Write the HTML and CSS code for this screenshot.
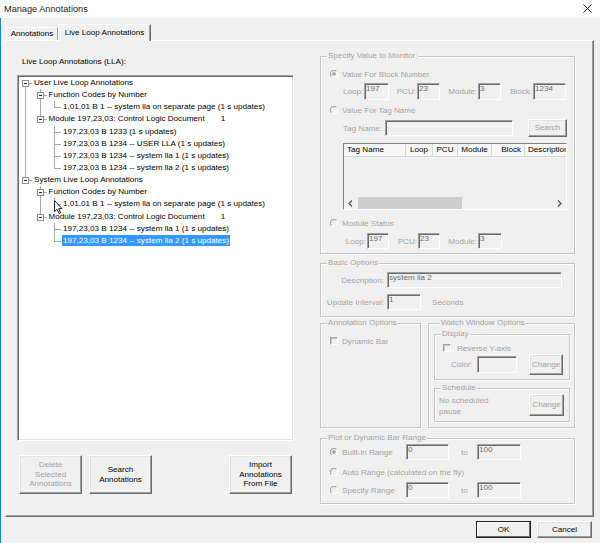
FILE: index.html
```html
<!DOCTYPE html>
<html lang="en">
<head>
  <meta charset="UTF-8">
  <title>Manage Annotations</title>
  <link rel="stylesheet" href="styles.css">
</head>
<body>

<div class="titlebar">
  <span class="title">Manage Annotations</span>
  <svg class="close" width="9" height="9" viewBox="0 0 9 9">
    <path d="M0.5 0.5 L8.5 8.5 M8.5 0.5 L0.5 8.5" stroke="#111" stroke-width="1" fill="none"/>
  </svg>
</div>

<div class="client">
  <div class="tabstrip">
    <div class="tab">Annotations</div>
    <div class="tab active">Live Loop Annotations</div>
  </div>

  <div class="tabpanel">
    <div class="leftcol">
      <div class="caption">Live Loop Annotations (LLA):</div>
      <div class="tree">
        <ul>
          <li>
            <div class="node"><span class="exp"></span>User Live Loop Annotations</div>
            <ul>
              <li>
                <div class="node"><span class="exp"></span>Function Codes by Number</div>
                <ul>
                  <li><div class="node">1,01,01 B 1 -- system lla on separate page (1 s updates)</div></li>
                </ul>
              </li>
              <li>
                <div class="node"><span class="exp"></span>Module 197,23,03: Control Logic Document<span class="cnt">1</span></div>
                <ul>
                  <li><div class="node">197,23,03 B 1233 (1 s updates)</div></li>
                  <li><div class="node">197,23,03 B 1234 -- USER LLA (1 s updates)</div></li>
                  <li><div class="node">197,23,03 B 1234 -- system lla 1 (1 s updates)</div></li>
                  <li><div class="node">197,23,03 B 1234 -- system lla 2 (1 s updates)</div></li>
                </ul>
              </li>
            </ul>
          </li>
          <li>
            <div class="node"><span class="exp"></span>System Live Loop Annotations</div>
            <ul>
              <li>
                <div class="node"><span class="exp"></span>Function Codes by Number</div>
                <ul>
                  <li><div class="node">1,01,01 B 1 -- system lla on separate page (1 s updates)</div></li>
                </ul>
              </li>
              <li>
                <div class="node"><span class="exp"></span>Module 197,23,03: Control Logic Document<span class="cnt">1</span></div>
                <ul>
                  <li><div class="node">197,23,03 B 1234 -- system lla 1 (1 s updates)</div></li>
                  <li><div class="node"><span class="sel">197,23,03 B 1234 -- system lla 2 (1 s updates)</span></div></li>
                </ul>
              </li>
            </ul>
          </li>
        </ul>
      </div>

      <div class="actions">
        <button class="btn tall off">Delete<br>Selected<br>Annotations</button>
        <button class="btn tall">Search<br>Annotations</button>
        <button class="btn tall push">Import<br>Annotations<br>From File</button>
      </div>
    </div>

    <div class="rightcol">
      <fieldset class="group g-monitor">
        <legend>Specify Value to Monitor:</legend>
        <div class="opt r-a"><span class="radio on"></span>Value For Block Number</div>
        <div class="inrow r-b">
          <span class="lbl w21">Loop:</span><span class="field w25">197</span>
          <span class="lbl w28">PCU:</span><span class="field w23">23</span>
          <span class="lbl w38">Module:</span><span class="field w23">3</span>
          <span class="lbl w32">Block:</span><span class="field w33">1234</span>
        </div>
        <div class="opt r-c"><span class="radio"></span>Value For Tag Name</div>
        <div class="inrow r-d">
          <span class="lbl w42 left">Tag Name:</span><span class="field w128"></span>
          <button class="btn off small">Search</button>
        </div>
        <div class="lv">
          <div class="lv-head">
            <span class="c1">Tag Name</span><span class="c2">Loop</span><span class="c3">PCU</span><span class="c4">Module</span><span class="c5">Block</span><span class="c6">Description</span>
          </div>
          <div class="lv-body"></div>
          <div class="hscroll">
            <span class="arr">
              <svg width="5" height="7" viewBox="0 0 5 7"><path d="M4 0.5 L1 3.5 L4 6.5" stroke="#555" stroke-width="1.3" fill="none"/></svg>
            </span>
            <span class="track"><span class="thumb"></span></span>
            <span class="arr">
              <svg width="5" height="7" viewBox="0 0 5 7"><path d="M1 0.5 L4 3.5 L1 6.5" stroke="#555" stroke-width="1.3" fill="none"/></svg>
            </span>
          </div>
        </div>
        <div class="opt r-f"><span class="radio"></span>Module Status</div>
        <div class="inrow r-g">
          <span class="lbl w24">Loop:</span><span class="field w22">197</span>
          <span class="lbl w29">PCU:</span><span class="field w22">23</span>
          <span class="lbl w38">Module:</span><span class="field w24">3</span>
        </div>
      </fieldset>

      <fieldset class="group g-basic">
        <legend>Basic Options</legend>
        <div class="inrow b-1">
          <span class="lbl w66">Description:</span><span class="field w175">system lla 2</span>
        </div>
        <div class="inrow b-2">
          <span class="lbl w66">Update Interval:</span><span class="field w34">1</span>
          <span class="unit">Seconds</span>
        </div>
      </fieldset>

      <div class="optrow">
        <fieldset class="group g-annot">
          <legend>Annotation Options</legend>
          <div class="opt k-1"><span class="check"></span>Dynamic Bar</div>
        </fieldset>
        <fieldset class="group g-watch">
          <legend>Watch Window Options</legend>
          <fieldset class="group g-display">
            <legend>Display</legend>
            <div class="opt k-2"><span class="check"></span>Reverse Y-axis</div>
            <div class="colorrow">
              <span class="lbl w26 left">Color:</span><span class="field w40 h17"></span>
              <button class="btn off change">Change</button>
            </div>
          </fieldset>
          <fieldset class="group g-sched">
            <legend>Schedule</legend>
            <div class="schedrow">
              <span class="schedtext">No scheduled<br>pause</span>
              <button class="btn off change2">Change</button>
            </div>
          </fieldset>
        </fieldset>
      </div>

      <fieldset class="group g-plot">
        <legend>Plot or Dynamic Bar Range</legend>
        <div class="opt p-1"><span class="radio on"></span><span class="rlbl">Built-in Range</span><span class="field w43">0</span><span class="to">to</span><span class="field w44">100</span></div>
        <div class="opt p-2"><span class="radio"></span>Auto Range (calculated on the fly)</div>
        <div class="opt p-3"><span class="radio"></span><span class="rlbl">Specify Range</span><span class="field w43">0</span><span class="to">to</span><span class="field w44">100</span></div>
      </fieldset>
    </div>
  </div>

  <div class="footer">
    <button class="btn dlg default">OK</button>
    <button class="btn dlg">Cancel</button>
  </div>
</div>

<svg class="cursor" width="10" height="15" viewBox="0 0 10 15">
  <path d="M0.5 0.5 L0.5 11.5 L3 9.2 L5 13.5 L6.6 12.8 L4.7 8.6 L8 8.6 Z" fill="#fff" stroke="#222" stroke-width="1"/>
</svg>

</body>
</html>
```

FILE: styles.css
```css
* {
  box-sizing: border-box;
}

body {
  margin: 0;
  width: 600px;
  height: 543px;
  overflow: hidden;
  font-family: "Liberation Sans", Arial, sans-serif;
  font-size: 8.1px;
  color: #000;
  background: #f0f0f0;
  position: relative;
}

.titlebar {
  height: 18px;
  background: #fff;
  display: flex;
  align-items: center;
  justify-content: space-between;
  padding: 0 8px 1px 4px;
}

.title {
  font-size: 9.2px;
  line-height: 12px;
  color: #1a1a1a;
}

.client {
  height: 525px;
  border-left: 1px solid #1883d7;
  background: #f0f0f0;
}

/* tabs */
.tabstrip {
  height: 22px;
  display: flex;
  align-items: flex-end;
  padding-left: 5px;
}

.tab {
  width: 52px;
  height: 13px;
  line-height: 12px;
  text-align: center;
  border: 1px solid #fff;
  border-bottom: none;
  border-right-color: #a0a0a0;
}

.tab.active {
  width: 93px;
  height: 17px;
  line-height: 15px;
  margin-bottom: -1px;
  background: #f0f0f0;
  border-right: 1px solid #696969;
  box-shadow: inset -1px 0 #a0a0a0;
  position: relative;
  z-index: 1;
}

.tabpanel {
  margin-left: 4px;
  width: 589px;
  height: 477px;
  border: 1px solid;
  border-color: #fff #696969 #696969 #fff;
  box-shadow: inset -1px -1px #a0a0a0;
  display: flex;
  gap: 26px;
  padding: 10px 0 0 11px;
}

/* left column */
.leftcol {
  width: 277px;
}

.caption {
  margin: 5px 0 0 5px;
  height: 12px;
  line-height: 12px;
}

.tree {
  margin-top: 7px;
  height: 366px;
  background: #fff;
  border: 1px solid;
  border-color: #a0a0a0 #fff #fff #a0a0a0;
  box-shadow: inset 1px 1px #696969, inset -1px -1px #e3e3e3;
  padding: 1px;
  overflow: hidden;
}

.tree ul {
  list-style: none;
  margin: 0;
  padding: 0;
}

.tree ul ul {
  padding-left: 14.5px;
}

.tree li {
  position: relative;
}

.tree li::before {
  content: "";
  position: absolute;
  left: 6px;
  top: 0;
  bottom: 0;
  border-left: 1px solid #a5a5a5;
}

.tree li:last-child::before {
  bottom: auto;
  height: 6px;
}

.tree > ul > li:first-child::before {
  top: 6px;
}

.node {
  position: relative;
  height: 12.15px;
  line-height: 12.15px;
  padding-left: 15px;
  white-space: nowrap;
}

.node::before {
  content: "";
  position: absolute;
  left: 6px;
  top: 6px;
  width: 7px;
  border-top: 1px solid #a5a5a5;
}

.exp {
  position: absolute;
  left: 3px;
  top: 3px;
  width: 7px;
  height: 7px;
  background: #fff;
  border: 1px solid #8f8f8f;
  z-index: 1;
}

.exp::after {
  content: "";
  position: absolute;
  left: 1px;
  top: 2px;
  width: 3px;
  border-top: 1px solid #222;
}

.cnt {
  margin-left: 16px;
}

.sel {
  display: inline-block;
  line-height: 11px;
  padding: 0 1px;
  margin-left: -1px;
  background: #3399ff;
  color: #fff;
}

.actions {
  margin-top: 14px;
  display: flex;
  gap: 7px;
  padding: 0 2px;
}

/* buttons */
.btn {
  font: inherit;
  padding: 0;
  margin: 0;
  display: flex;
  align-items: center;
  justify-content: center;
  text-align: center;
  line-height: 9.7px;
  color: #000;
  background: #f0f0f0;
  border: 1px solid;
  border-color: #fff #696969 #696969 #fff;
  box-shadow: inset -1px -1px #a0a0a0, inset 1px 1px #e3e3e3;
}

.btn.off {
  color: #a3a3a3;
}

.btn.push {
  margin-left: auto;
}

.tall {
  width: 63px;
  height: 39px;
}

.btn.small {
  width: 39px;
  height: 18px;
  margin-left: 15px;
}

.btn.change {
  width: 34px;
  height: 21px;
  margin-left: 12px;
}

.change2 {
  width: 35px;
  height: 22px;
}

.dlg {
  width: 55px;
  height: 17px;
}

.btn.default {
  border-color: #222;
  box-shadow: inset -1px -1px #696969, inset 1px 1px #fff;
}

/* right column */
.rightcol {
  width: 255px;
  color: #a3a3a3;
}

.group {
  margin: 0;
  padding: 0;
  min-width: 0;
  border: 1px solid #c4c4c4;
  box-shadow: inset 1px 1px #fff, 1px 1px #fff;
}

.group legend {
  margin-left: 6px;
  padding: 0 1px;
  height: 10px;
  line-height: 10px;
  background: #f0f0f0;
}

.g-monitor {
  height: 203px;
}

.g-basic {
  height: 59px;
  margin-top: 4px;
}

.optrow {
  display: flex;
  gap: 7px;
  margin-top: 1px;
}

.g-annot {
  width: 101px;
  height: 110px;
}

.g-watch {
  width: 147px;
  height: 110px;
  padding: 0 4px 0 5px;
}

.g-display {
  margin-top: 1px;
  height: 51px;
}

.g-sched {
  margin-top: 3px;
  height: 39px;
}

.g-plot {
  margin-top: 5px;
  height: 71px;
}

.opt {
  display: flex;
  align-items: center;
  height: 12px;
  padding-left: 9px;
  white-space: nowrap;
}

.radio {
  flex: none;
  width: 8px;
  height: 8px;
  margin-right: 4px;
  border-radius: 50%;
  border: 1px solid;
  border-color: #a0a0a0 #fff #fff #a0a0a0;
  background: #f0f0f0;
}

.radio.on {
  background: radial-gradient(circle, #a0a0a0 0 1.4px, #f0f0f0 1.9px);
}

.check {
  flex: none;
  width: 8px;
  height: 8px;
  margin-right: 4px;
  border: 1px solid;
  border-color: #a0a0a0 #fff #fff #a0a0a0;
  box-shadow: inset 1px 1px #c8c8c8;
  background: #f0f0f0;
}

.inrow {
  display: flex;
  align-items: center;
  padding-left: 22px;
  white-space: nowrap;
}

.lbl {
  flex: none;
  text-align: right;
  padding-right: 1px;
}

.lbl.left {
  text-align: left;
  padding-right: 0;
}

.field {
  flex: none;
  height: 16px;
  padding-left: 1px;
  line-height: 9px;
  color: #6d6d6d;
  background: #f0f0f0;
  border: 1px solid;
  border-color: #a0a0a0 #fff #fff #a0a0a0;
  box-shadow: inset 1px 1px #696969;
}

.h17 { height: 17px; }

.w21 { width: 21px; }
.w22 { width: 22px; }
.w23 { width: 23px; }
.w24 { width: 24px; }
.w25 { width: 25px; }
.w26 { width: 26px; }
.w28 { width: 28px; }
.w29 { width: 29px; }
.w32 { width: 32px; }
.w33 { width: 33px; }
.w34 { width: 34px; }
.w38 { width: 38px; }
.w40 { width: 40px; }
.w42 { width: 42px; }
.w43 { width: 43px; }
.w44 { width: 44px; }
.w66 { width: 66px; padding-right: 3px; }
.w128 { width: 128px; }
.w175 { width: 175px; }

.r-a { margin-top: 7px; }
.r-b { margin-top: 3px; height: 17px; }
.r-b .field { height: 17px; }
.r-c { margin-top: 4px; }
.r-d { margin-top: 3px; height: 18px; }
.r-f { margin-top: 7px; }
.r-g { margin-top: 4px; height: 16px; }

.b-1 { margin-top: 4px; height: 16px; padding-left: 0; }
.b-2 { margin-top: 6px; height: 16px; padding-left: 0; }

.unit {
  margin-left: 11px;
}

.k-1 { margin-top: 7px; }
.k-2 { margin-top: 3px; padding-left: 8px; }
.k-2 .check { margin-right: 6px; }

.colorrow {
  display: flex;
  align-items: center;
  height: 21px;
  padding-left: 16px;
}

.schedrow {
  display: flex;
  align-items: flex-start;
  margin-top: 1px;
  padding-left: 4px;
}

.schedtext {
  width: 90px;
  line-height: 11px;
  padding-top: 0.5px;
}

.p-1 { margin-top: 1px; height: 16px; }
.p-2 { margin-top: 6px; }
.p-3 { margin-top: 4px; height: 16px; }

.rlbl {
  width: 64px;
}

.to {
  width: 28px;
  padding-left: 12px;
}

/* list view */
.lv {
  margin: 6px 0 0 22px;
  width: 224px;
  height: 67px;
  border: 1px solid;
  border-color: #828282 #fff #fff #828282;
  box-shadow: inset 1px 1px #a0a0a0;
  display: flex;
  flex-direction: column;
  overflow: hidden;
}

.lv-head {
  display: flex;
  height: 13px;
  line-height: 12px;
  color: #000;
  background: #f7f7f7;
  border-bottom: 1px solid #d5d5d5;
  white-space: nowrap;
  flex: none;
}

.lv-head span {
  flex: none;
  border-right: 1px solid #d5d5d5;
  overflow: hidden;
}

.c1 { width: 62px; padding-left: 3px; }
.c2 { width: 27px; text-align: center; }
.c3 { width: 25px; text-align: center; }
.c4 { width: 34px; text-align: center; }
.c5 { width: 33px; text-align: right; padding-right: 3px; }
.lv-head .c6 { width: 60px; padding-left: 3px; border-right: none; }

.lv-body {
  flex: 1;
  background: #f0f0f0;
}

.hscroll {
  flex: none;
  height: 12px;
  display: flex;
  background: #f0f0f0;
}

.arr {
  width: 13px;
  display: flex;
  align-items: center;
  justify-content: center;
}

.track {
  flex: 1;
  display: flex;
  padding: 0 0 0 1px;
}

.thumb {
  width: 104px;
  background: #cdcdcd;
}

/* footer */
.footer {
  display: flex;
  justify-content: flex-end;
  gap: 6px;
  margin-top: 4px;
  padding-right: 8px;
}

.cursor {
  position: absolute;
  left: 54px;
  top: 200px;
}
```
